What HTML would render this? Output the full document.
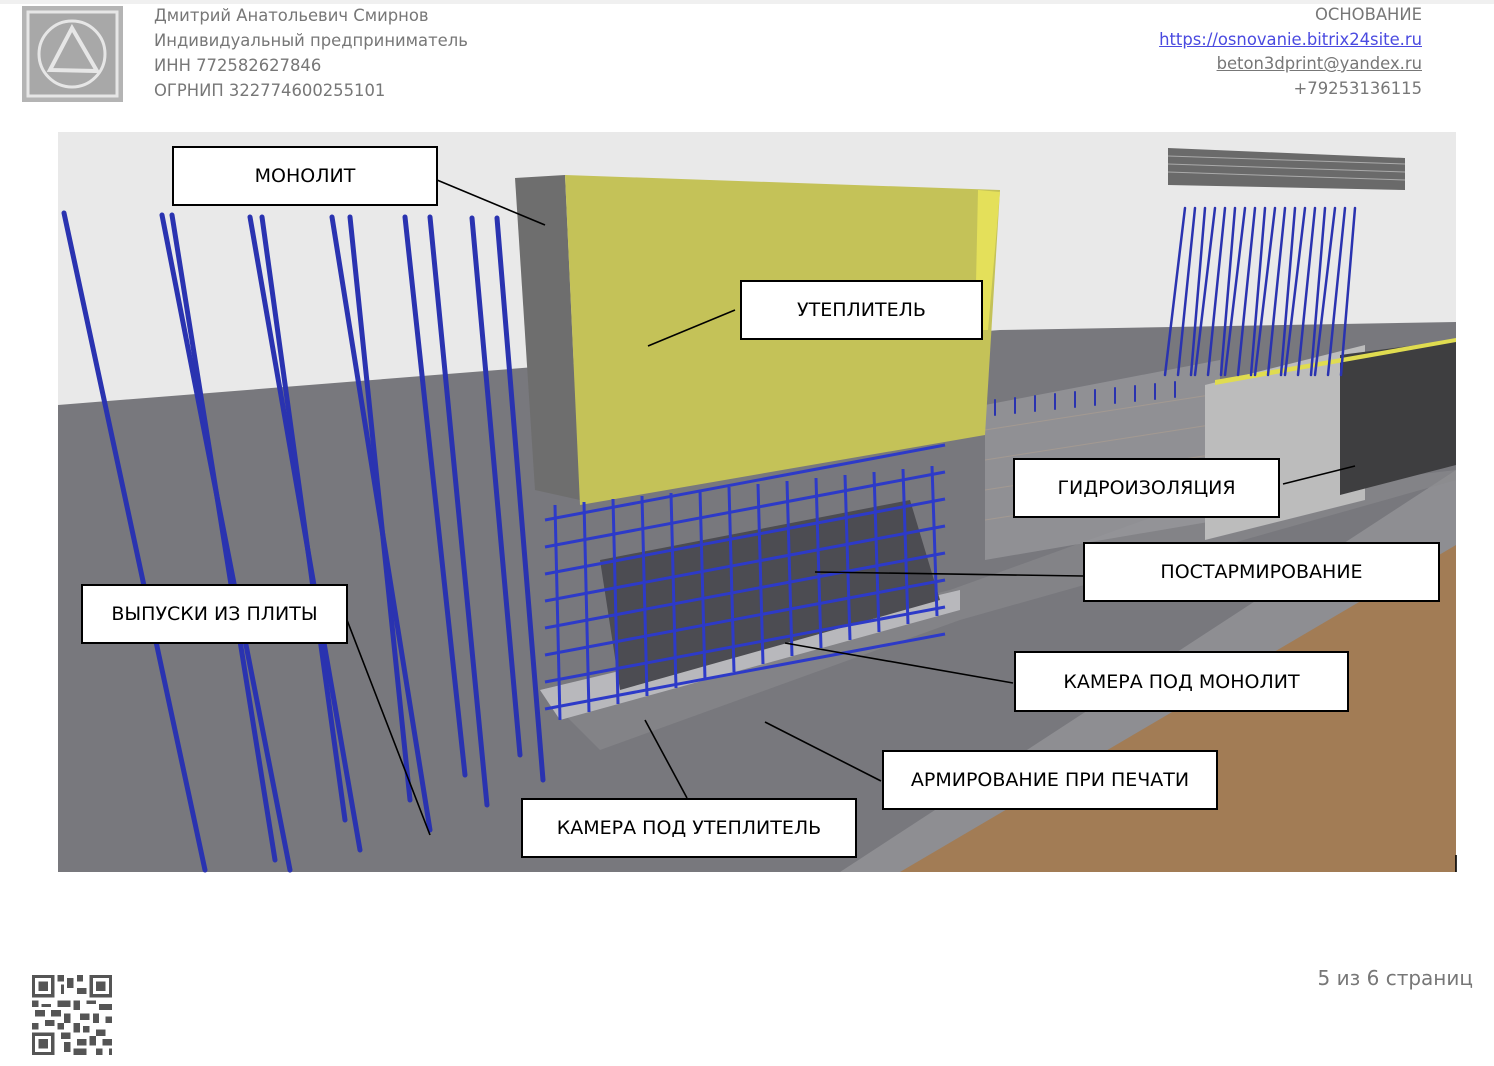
<!DOCTYPE html>
<html><head><meta charset="utf-8"><style>
body{margin:0;width:1494px;height:1066px;background:#fff;font-family:"Liberation Sans","DejaVu Sans",sans-serif;position:relative;overflow:hidden}
.t{position:absolute;color:#777;font-family:"DejaVu Sans","Liberation Sans",sans-serif;font-size:16.4px;line-height:25px}
.r{text-align:right;right:72px}
a{color:#4a4ae0;text-decoration:underline}
.lab{position:absolute;background:#fff;border:2px solid #000;box-sizing:border-box;display:flex;align-items:center;justify-content:center;font-size:19px;color:#000;font-family:"DejaVu Sans",sans-serif}
</style></head><body>
<div style="position:absolute;left:0;top:0;width:1494px;height:4px;background:#f0f0f0"></div>
<svg style="position:absolute;left:22px;top:6px" width="101" height="96" viewBox="0 0 101 96">
<rect width="101" height="96" fill="#b4b4b4"/><rect x="6" y="6" width="89" height="84" fill="#a8a8a8" stroke="#e6e6e6" stroke-width="3"/>
<circle cx="50" cy="48" r="33" fill="none" stroke="#e6e6e6" stroke-width="3"/>
<path d="M50 22 L28 64 L75 65 Z" fill="none" stroke="#e6e6e6" stroke-width="4"/></svg>
<div class="t" style="left:154px;top:3px">Дмитрий Анатольевич Смирнов<br>Индивидуальный предприниматель<br>ИНН 772582627846<br>ОГРНИП 322774600255101</div>
<div class="t r" style="top:3px;line-height:24.5px">ОСНОВАНИЕ<br><a>https://osnovanie.bitrix24site.ru</a><br><span style="text-decoration:underline">beton3dprint@yandex.ru</span><br>+79253136115</div>
<svg id="s" style="position:absolute;left:0;top:0" width="1494" height="1066">
<rect x="58" y="132" width="1398" height="740" fill="#e9e9e9"/>
<polygon points="58,405 1000,330 1456,322 1456,872 58,872" fill="#78787d"/>
<polygon points="840,872 1456,470 1456,872" fill="#8e8e92"/>
<polygon points="900,872 1456,545 1456,872" fill="#a27c55"/>
<polygon points="540,690 950,590 1200,500 1456,470 1456,480 960,620 600,750" fill="#8a8a8e" opacity=".6"/>
<polygon points="540,690 960,590 960,610 560,720" fill="#b8b8bc"/>
<polygon points="600,560 910,500 940,600 620,690" fill="#4c4c52"/>
<polygon points="985,405 1220,360 1220,520 985,560" fill="#9a9a9e" opacity=".7"/>
<g stroke="#b0a090" stroke-width="1" opacity=".6"><line x1="985" y1="430" x2="1210" y2="395"/><line x1="985" y1="460" x2="1210" y2="425"/><line x1="985" y1="490" x2="1210" y2="455"/><line x1="985" y1="520" x2="1210" y2="485"/></g>
<polygon points="1205,385 1365,345 1365,500 1205,540" fill="#bcbcbc"/>
<polygon points="1340,355 1456,340 1456,465 1340,495" fill="#3e3e40"/>
<polygon points="1215,380 1456,338 1456,342 1215,385" fill="#e0dc50"/>
<polygon points="1168,148 1405,158 1405,190 1168,185" fill="#6a6a6a"/>
<g stroke="#aaa" stroke-width="1"><line x1="1168" y1="156" x2="1405" y2="164"/><line x1="1168" y1="164" x2="1405" y2="172"/><line x1="1168" y1="172" x2="1405" y2="180"/></g>
<polygon points="515,178 565,175 580,500 535,490" fill="#6e6e6e"/>
<polygon points="565,175 1000,190 985,435 580,505" fill="#c4c258"/>
<polygon points="978,190 1000,192 988,330 975,330" fill="#e4e05a"/>
<g id="rb" stroke="#2a33b0" stroke-width="4" stroke-linecap="round"></g>
<g id="mesh" stroke="#2d3ac8" stroke-width="3"></g>
<g stroke="#000" stroke-width="1.6">
<line x1="437" y1="180" x2="545" y2="225"/><line x1="735" y1="310" x2="648" y2="346"/>
<line x1="1283" y1="484" x2="1355" y2="466"/><line x1="1083" y1="576" x2="815" y2="572"/>
<line x1="347" y1="620" x2="430" y2="835"/><line x1="1013" y1="683" x2="785" y2="643"/>
<line x1="881" y1="781" x2="765" y2="722"/><line x1="687" y1="798" x2="645" y2="720"/>
<line x1="1456" y1="855" x2="1456" y2="872"/></g>
</svg>
<script>
var rb=document.getElementById('rb'),m=document.getElementById('mesh'),ns='http://www.w3.org/2000/svg';
function L(g,a,b,c,d,w){var l=document.createElementNS(ns,'line');l.setAttribute('x1',a);l.setAttribute('y1',b);l.setAttribute('x2',c);l.setAttribute('y2',d);if(w)l.setAttribute('stroke-width',w);g.appendChild(l);}
[[64,213,205,870],[162,215,290,870],[172,215,275,860],[250,217,360,850],[262,217,345,820],[332,217,430,830],[350,217,410,800],[405,217,465,775],[430,217,487,805],[472,218,520,755],[497,218,543,780]].forEach(function(a){L(rb,a[0],a[1],a[2],a[3],5)});
for(var i=0;i<18;i++){var x=1185+i*10;L(rb,x,208,x-20+(i%3)*3,375,2.5);}
for(var i=0;i<14;i++){var x=555+i*29;L(m,x,505-i*3,x+5,720-i*8);}
for(var j=0;j<8;j++){var y=515+j*27;L(m,545,y+5,945,y-70);}
for(var i=0;i<10;i++){var x=995+i*20;L(rb,x,415-i*2,x,400-i*2,2);}
var q=document.getElementById('qr');
</script>
<div class="lab" style="left:172px;top:146px;width:266px;height:60px">МОНОЛИТ</div>
<div class="lab" style="left:740px;top:280px;width:243px;height:60px">УТЕПЛИТЕЛЬ</div>
<div class="lab" style="left:1013px;top:458px;width:267px;height:60px">ГИДРОИЗОЛЯЦИЯ</div>
<div class="lab" style="left:1083px;top:542px;width:357px;height:60px">ПОСТАРМИРОВАНИЕ</div>
<div class="lab" style="left:81px;top:584px;width:267px;height:60px">ВЫПУСКИ ИЗ ПЛИТЫ</div>
<div class="lab" style="left:1014px;top:651px;width:335px;height:61px">КАМЕРА ПОД МОНОЛИТ</div>
<div class="lab" style="left:882px;top:750px;width:336px;height:60px">АРМИРОВАНИЕ ПРИ ПЕЧАТИ</div>
<div class="lab" style="left:521px;top:798px;width:336px;height:60px">КАМЕРА ПОД УТЕПЛИТЕЛЬ</div>
<svg style="position:absolute;left:32px;top:975px" width="80" height="80" viewBox="0 0 25 25" shape-rendering="crispEdges">
<rect width="25" height="25" fill="#fff"/>
<g fill="#555">
<path d="M0 0h7v7H0zM18 0h7v7h-7zM0 18h7v7H0z"/>
</g>
<g fill="#fff"><path d="M1 1h5v5H1zM19 1h5v5h-5zM1 19h5v5H1z"/></g>
<g fill="#555"><path d="M2 2h3v3H2zM20 2h3v3h-3zM2 20h3v3H2z"/>
<path d="M8 0h2v2H8zM11 1h2v3h-2zM14 0h2v2h-2zM9 3h1v3H9zM14 4h3v2h-3zM0 8h2v2H0zM3 9h3v1H3zM8 8h4v2H8zM13 8h2v3h-2zM17 8h3v1h-3zM21 9h4v2h-4zM1 11h3v2H1zM6 11h3v2H6zM10 12h2v3h-2zM15 12h3v2h-3zM19 12h2v3h-2zM23 13h2v2h-2zM0 15h2v2H0zM4 14h3v2H4zM8 15h2v2H8zM13 15h2v3h-2zM16 16h2v2h-2zM20 17h3v2h-3zM9 18h3v2H9zM18 19h2v3h-2zM22 20h3v2h-3zM10 21h2v3h-2zM14 20h3v2h-3zM13 23h4v2h-4zM20 23h2v2h-2zM24 23h1v2h-1z"/></g>
</svg>
<div style="position:absolute;right:21px;top:966px;font-size:20px;color:#777;font-family:'DejaVu Sans',sans-serif">5 из 6 страниц</div>
</body></html>
